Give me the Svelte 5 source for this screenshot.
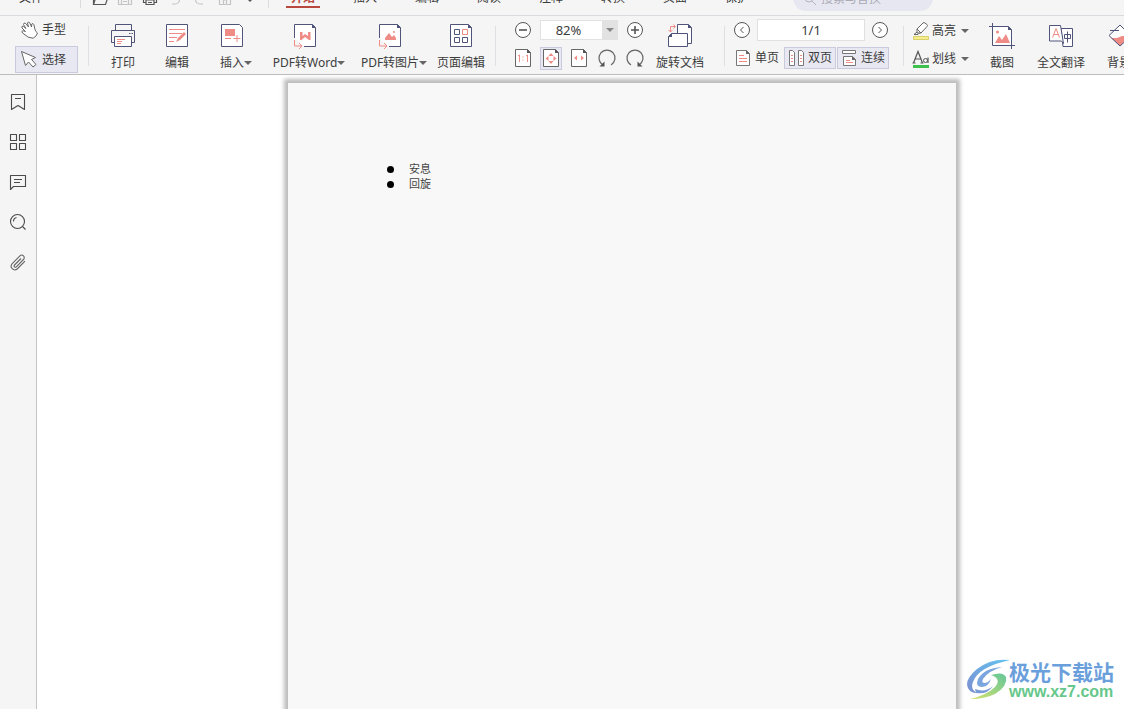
<script>
  const menus = ['插入', '编辑', '阅读', '注释', '转换', '页面', '保护'];
  const fileTools = [
    { id: 'open', label: '打开' },
    { id: 'save', label: '保存', dim: true },
    { id: 'print', label: '打印' },
    { id: 'undo', label: '撤销', dim: true },
    { id: 'redo', label: '恢复', dim: true },
    { id: 'home', label: '主页', dim: true },
    { id: 'more', label: '更多' }
  ];
  const mainTools = [
    { id: 'printer', label: '打印', size: 'normal' },
    { id: 'edit', label: '编辑', size: 'normal' },
    { id: 'insert', label: '插入', size: 'medium', menu: true },
    { id: 'word', label: 'PDF转Word', size: 'widest', menu: true },
    { id: 'image', label: 'PDF转图片', size: 'wide', menu: true },
    { id: 'pages', label: '页面编辑', size: 'roomy' }
  ];
  const endTools = [
    { id: 'shot', label: '截图', size: 'medium' },
    { id: 'translate', label: '全文翻译', size: 'roomy' },
    { id: 'back', label: '背景', size: 'normal' }
  ];
  const viewTools = [
    { id: 'actual', label: '实际大小' },
    { id: 'fit', label: '适合页面', on: true },
    { id: 'fitw', label: '适合宽度' },
    { id: 'ccw', label: '逆时针旋转' },
    { id: 'cw', label: '顺时针旋转' }
  ];
  const sideTools = [
    { id: 'bookmark', label: '书签' },
    { id: 'grid', label: '缩略图' },
    { id: 'comment', label: '批注' },
    { id: 'find', label: '查找' },
    { id: 'clip', label: '附件' }
  ];
  const items = ['安息', '回旋'];
  let zoom = $state('82%');
  let page = $state('1/1');
</script>

{#snippet fileIcon(id)}
  <svg width="16" height="16" viewBox="0 0 16 16" fill="none" stroke="currentColor" stroke-width="1.2">
    {#if id === 'open'}
      <path d="M1.500 13.500V2.500h5l2 2h5v3M1.500 13.500l2-6h12l-2 6z" />
    {:else if id === 'save'}
      <path d="M1.500 1.500h11l2 2v10h-13zM4.500 13v-5h7v5M6 10.500h4" />
    {:else if id === 'print'}
      <path d="M4 5V1.500h8V5M4 11.500H1.500V5.500h13v6H12M4 9h8v4.500H4zM6 11.500h4" />
    {:else if id === 'undo'}
      <path d="M5 1L2 4l3 3M2 4h6a4.500 4.500 0 0 1 0 9H5" />
    {:else if id === 'redo'}
      <path d="M11 1l3 3-3 3M14 4H8a4.500 4.500 0 0 0 0 9h3" />
    {:else if id === 'home'}
      <path d="M2.500 6.500L8 2l5.500 4.500v7h-11zM6.500 13V9h3v4" />
    {:else}
      <path d="M5 8h6l-3 3z" fill="currentColor" stroke="none" />
    {/if}
  </svg>
{/snippet}

{#snippet bigIcon(id)}
  <svg width="26" height="26" viewBox="0 0 26 26" fill="none" stroke="#4f5478" stroke-width="1">
    {#if id === 'printer'}
      <path d="M5.500 7.500v-6h16v6M5 19.500H1.500V7.500h23v12H21" />
      <path d="M4.500 13.500h17v10h-17z" fill="#fff" />
      <path d="M19 10.500h1.500M21.500 10.500H23" />
      <path d="M7 16.500h8M7 18.500h5M7 20.500h4" stroke="#ee8c85" />
    {:else if id === 'edit'}
      <path d="M2.500 1.500h21v22h-21z" fill="#fff" />
      <path d="M5 6.500h16M5 10.500h13M5 14.500h8M5 18.500h5" stroke="#ee8c85" />
      <path d="M12 19l2-4 6-6 2 2-6 6z" fill="#ee8c85" stroke="none" />
    {:else if id === 'insert'}
      <path d="M2.500 1.500h18l3 3v19h-21z" fill="#fff" />
      <path d="M6 6h10v7H6z" fill="#ee8c85" stroke="none" />
      <path d="M6 15.500h6M18 12v7M14.500 15.500h7" stroke="#ee8c85" />
    {:else if id === 'word' || id === 'image'}
      <path d="M2.500 15V1.500h18l3 3v19H12" fill="#fff" stroke="none" />
      <path d="M2.500 15V1.500h18l3 3v19H12" />
      <path d="M20 1v4h4z" fill="#4f5478" stroke="none" />
      <path d="M2.500 17v6h7M7 20l3 3-3 3" stroke="#ee8c85" />
      {#if id === 'word'}
        <path d="M8 9h2.500v4l2.500-2 3 2V9H18.500v8H17l-4-3-3.500 3H8z" fill="#ee8c85" stroke="none" />
      {:else}
        <path d="M8 17v-2l4-5 3 4 2-2 2 3v2z" fill="#ee8c85" stroke="none" />
        <circle cx="17" cy="9" r="1" fill="#ee8c85" stroke="none" />
      {/if}
    {:else if id === 'pages'}
      <path d="M2.500 1.500h18l3 3v19h-21z" fill="#fff" />
      <path d="M20 1v4h4z" fill="#4f5478" stroke="none" />
      <path d="M6.500 6.500h5v5h-5zM6.500 14.500h5v5h-5zM14.500 14.500h5v5h-5z" />
      <path d="M14.500 6.500h5v5h-5z" stroke="#ee8c85" />
    {:else if id === 'rotate'}
      <path d="M10.500 10V1.500h11l3 3v16h-4" fill="#fff" />
      <path d="M21 1v4h4z" fill="#4f5478" stroke="none" />
      <path d="M1.500 13.500l3-3h16v13h-19z" fill="#fff" />
      <path d="M1 14l4-4v4z" fill="#4f5478" stroke="none" />
      <path d="M3.500 9V3.500H8M1.500 7l2 2 2-2M6.500 1.500l2 2-2 2" stroke="#ee8c85" />
    {:else if id === 'shot'}
      <path d="M3.500 3.500h17l2 2v17h-19z" fill="#fff" stroke="none" />
      <path d="M0 3.500h19.500l3 3V26M3.500 0v22.500H26" />
      <path d="M19 3v4h4z" fill="#4f5478" stroke="none" />
      <path d="M6 20l4-7 3 4 4-6 4 9z" fill="#ee8c85" stroke="none" />
      <circle cx="8.500" cy="9" r="1.500" fill="#ee8c85" stroke="none" />
    {:else if id === 'translate'}
      <path d="M13 5.500h11.500v18H15z" fill="#fff" />
      <path d="M1.500 2.500h11l3 18-2-2.500h-12z" fill="#fff" />
      <path d="M4.500 14.500l3.500-9 3.500 9M6 11.500h4.500" stroke="#ee8c85" />
      <path d="M16.500 11.500h6v4h-6zM19.500 8.500v11" />
    {:else}
      <path d="M3 13L14 2l11 11-11 10z" fill="#fff" stroke="none" />
      <path d="M5 15l6 0 5-2 8 0-10 10z" fill="#ee8c85" stroke="none" />
      <path d="M3 12.500L14 2l11 11-11 10zM4 7.500h9" />
    {/if}
  </svg>
{/snippet}

{#snippet viewIcon(id)}
  <svg width="20" height="20" viewBox="0 0 20 20" fill="none" stroke="#666" stroke-width="1">
    {#if id === 'ccw'}
      <path d="M6 17a8 8 0 1 1 8 0" stroke-width="1.200" /><path d="M2.500 18.500H7.500V13.500z" fill="#555" stroke="none" />
    {:else if id === 'cw'}
      <path d="M14 17a8 8 0 1 0-8 0" stroke-width="1.200" /><path d="M17.500 18.500H12.500V13.500z" fill="#555" stroke="none" />
    {:else}
      <path d="M2.500 1.500h12l3 3v14h-15z" fill="#fff" />
      <path d="M14 1v4h4z" fill="#555" stroke="none" />
      {#if id === 'actual'}
        <path d="M5 8l1.500-1v7M13 8l1.500-1v7M10 8.500v1M10 11.500v1" stroke="#ee8c85" />
      {:else if id === 'fit'}
        <path d="M10 5l2.500 3h-5zM10 16l2.500-3h-5zM4.500 10.500l3-2.500v5zM15.500 10.500l-3-2.500v5z" fill="#ee8c85" stroke="none" />
      {:else}
        <path d="M5 10l3-2.500v5zM15 10l-3-2.500v5z" fill="#ee8c85" stroke="none" />
      {/if}
    {/if}
  </svg>
{/snippet}

{#snippet circleIcon(id)}
  <svg width="18" height="18" viewBox="0 0 18 18" fill="none" stroke="#555">
    <circle cx="9" cy="9" r="7.500" fill="#fff" />
    {#if id === 'minus'}<path d="M5 9h8" stroke-width="1.600" />
    {:else if id === 'plus'}<path d="M5 9h8M9 5v8" stroke-width="1.600" />
    {:else if id === 'prev'}<path d="M10.500 6l-3 3 3 3" />
    {:else}<path d="M7.500 6l3 3-3 3" />{/if}
  </svg>
{/snippet}

{#snippet modeIcon(id)}
  <svg width="18" height="18" viewBox="0 0 18 18" fill="none" stroke="#777" stroke-width="1">
    {#if id === 'single'}
      <path d="M2.500 1.500h10l3 3v12h-13z" fill="#fff" /><path d="M12 1v4h4z" fill="#666" stroke="none" />
      <path d="M5 6.500h5M5 9.500h8M5 12.500h8" stroke="#ee8c85" />
    {:else if id === 'double'}
      <path d="M2.500 1.500h3l2 2v13h-5zM11.500 1.500h3l2 2v13h-5z" fill="#fff" />
      <path d="M4 6.500h2M4 9.500h2M4 12.500h2M13 6.500h2M13 9.500h2M13 12.500h2" stroke="#ee8c85" />
    {:else}
      <path d="M2.500 1.500h13v3h-13zM3.500 7.500h9l3 3v6h-12z" fill="#fff" /><path d="M12 7v4h4z" fill="#666" stroke="none" />
      <path d="M6 11.500h4M6 13.500h7" stroke="#ee8c85" />
    {/if}
  </svg>
{/snippet}

{#snippet tool(t)}
  <button class="tool {t.size}">
    {@render bigIcon(t.id)}
    <span class="label">{t.label}{#if t.menu}<i class="arrow hang"></i>{/if}</span>
  </button>
{/snippet}

<div class="app">
  <header class="menubar">
    <button class="file">文件</button>
    <div class="quick">
      {#each fileTools as t}
        <button class:dim={t.dim} aria-label={t.label}>{@render fileIcon(t.id)}</button>
      {/each}
    </div>
    <nav>
      <button class="current">开始</button>
      {#each menus as m}<button>{m}</button>{/each}
    </nav>
    <label class="search">
      <svg width="12" height="12" viewBox="0 0 12 12" fill="none" stroke="#b4b5c0"><circle cx="5" cy="5" r="4" /><path d="M8 8l4 4" /></svg>
      <input type="text" placeholder="搜索与替换" aria-label="搜索与替换" />
    </label>
  </header>

  <div class="toolbar">
    <div class="stack cursor">
      <button class="small">
        <svg width="20" height="20" viewBox="0 0 20 20" fill="#fff" stroke="#666" stroke-width="1" stroke-linejoin="round" stroke-linecap="round">
          <path d="M8 17L2.500 13q-1.500-1.800.5-2.300l2.500.8L2 8q-.8-2 1.300-1.800L6 8.500 3.500 4.500q0-2 2-1.200L8.500 7 7.500 3q.8-1.900 2.200-.3L11.500 7l.3-3q1.200-1.300 2 .5L15 9.500q.3 2 2.500 3.500-.5 3-4 5z" />
        </svg>手型
      </button>
      <button class="small on">
        <svg width="20" height="20" viewBox="0 0 20 20" fill="#fff" stroke="#666" stroke-width="1" stroke-linejoin="round">
          <path d="M1.500 1.500l4 14 3-3.500 4.500 5 3-2.500-4.500-5 4-2z" />
        </svg>选择
      </button>
    </div>
    <div class="group">
      {#each mainTools as t}{@render tool(t)}{/each}
    </div>
    <div class="group zoom">
      <div class="stack">
        <div class="line">
          <button class="ic" aria-label="缩小">{@render circleIcon('minus')}</button>
          <div class="combo">
            <input type="text" bind:value={zoom} aria-label="缩放比例" />
            <button aria-label="选择缩放比例"><i class="arrow"></i></button>
          </div>
          <button class="ic" aria-label="放大">{@render circleIcon('plus')}</button>
        </div>
        <div class="line views">
          {#each viewTools as t}
            <button class="ic" class:on={t.on} aria-label={t.label}>{@render viewIcon(t.id)}</button>
          {/each}
        </div>
      </div>
      {@render tool({ id: 'rotate', label: '旋转文档', size: 'roomy' })}
    </div>
    <div class="group paging">
      <div class="stack">
        <div class="line">
          <button class="ic" aria-label="上一页">{@render circleIcon('prev')}</button>
          <input class="pageno" type="text" bind:value={page} aria-label="页码" />
          <button class="ic" aria-label="下一页">{@render circleIcon('next')}</button>
        </div>
        <div class="line modes">
          <button class="mode">{@render modeIcon('single')}单页</button>
          <button class="mode on">{@render modeIcon('double')}双页</button>
          <button class="mode on">{@render modeIcon('cont')}连续</button>
        </div>
      </div>
    </div>
    <div class="group last">
      <div class="stack">
        <button class="mark">
          <svg width="18" height="20" viewBox="0 0 18 20" fill="none" stroke="#666" stroke-width="1">
            <path d="M5 8l6-6q1-1 2 0l2 1.500q1 1 0 2L9 12H5zM5 8l4 4M5 11l-3 2.500h4l2-2" fill="#fff" />
            <path d="M1.500 15.500h15v3h-15z" fill="#f4ee8e" stroke="#d9d06a" />
          </svg>高亮<i class="arrow"></i>
        </button>
        <button class="mark">
          <svg width="18" height="20" viewBox="0 0 18 20" fill="none" stroke="#555" stroke-width="1.200">
            <path d="M1.500 14L6 2.500 10.500 14M3 10h6M16 8.500v5.500M0.500 14h3M8.500 14h3" />
            <circle cx="13.500" cy="11.500" r="2" stroke-width="1" />
            <path d="M1 16h16v3H1z" fill="#3fc04c" stroke="none" />
          </svg>划线<i class="arrow"></i>
        </button>
      </div>
      {#each endTools as t}{@render tool(t)}{/each}
    </div>
  </div>

  <div class="body">
    <aside>
      {#each sideTools as t}
        <button aria-label={t.label}>
          <svg width="18" height="18" viewBox="0 0 18 18" fill="none" stroke="#4a4a4a" stroke-width="1.100" stroke-linejoin="round">
            {#if t.id === 'bookmark'}
              <path d="M2.500 1.500h13v15L9 12.500l-6.500 4zM6 5.500h6" />
            {:else if t.id === 'grid'}
              <path d="M1.500 1.500h6v6h-6zM10.500 1.500h6v6h-6zM1.500 10.500h6v6h-6zM10.500 10.500h6v6h-6z" />
            {:else if t.id === 'comment'}
              <path d="M1.500 2.500h15v11H4.500l-3 3zM5 6.500h8M5 9.500h6" />
            {:else if t.id === 'find'}
              <circle cx="8.500" cy="8.500" r="7" /><path d="M4.500 8.500a4 4 0 0 1 3-4M13.500 13.500l3 3" />
            {:else}
              <path d="M12 5L5.500 11.500a1.200 1.200 0 0 0 1.800 1.800L14.500 6a2.500 2.500 0 0 0-3.600-3.600L3 10.300a3.700 3.700 0 0 0 5.200 5.200L16 7.700" transform="translate(0 .5)" stroke="#666" />
            {/if}
          </svg>
        </button>
      {/each}
    </aside>
    <main>
      <article>
        <ul>
          {#each items as item}<li>{item}</li>{/each}
        </ul>
      </article>
      <div class="brand">
        <svg width="44" height="42" viewBox="0 0 44 42">
          <defs>
            <linearGradient id="blue" x1="0" y1="1" x2="1" y2="0"><stop offset="0" stop-color="#7b8fd0" /><stop offset="1" stop-color="#63c3f0" /></linearGradient>
            <linearGradient id="green" x1="0" y1="1" x2="1" y2="0"><stop offset="0" stop-color="#d8e26c" /><stop offset="1" stop-color="#62c69a" /></linearGradient>
          </defs>
          <path d="M44 1Q25-1 11 10-2 21 2 29q2 5 9 5-7-4-4-11Q12 8 44 1z" fill="url(#blue)" />
          <path d="M36 8Q18 9 12 20q-3 8 4 8 7-1 9-8-2 3-6 4-4 0-2-4 5-8 19-12z" fill="#7ba5de" />
          <path d="M25 16q12-4 15 2 2 9-11 17-10 5-25 5 17-4 25-12 7-8-4-12z" fill="url(#green)" />
          <path d="M9 30q10 4 18-3-6 9-17 7z" fill="#7b9bd8" />
        </svg>
        <div><strong>极光下载站</strong><a href="#xz7">www.xz7.com</a></div>
      </div>
    </main>
  </div>
</div>

<style>
  :global(body) { margin: 0; overflow: hidden; }
  .app { display: flex; flex-direction: column; height: 100vh; overflow: hidden; background: #fff; color: #3c3c3c; font: 12px/16px "Noto Sans", "Noto Sans CJK SC", sans-serif; }
  button, input { font: inherit; color: inherit; border: 0; padding: 0; margin: 0; background: none; box-sizing: border-box; }
  svg { display: block; flex: none; }
  .menubar { display: flex; align-items: flex-end; height: 15px; flex: none; overflow: hidden; background: #f5f5f5; border-bottom: 1px solid #d9dade; }
  .menubar > *:not(.search) { margin-bottom: 7px; }
  .file { width: 81px; height: 20px; flex: none; padding-left: 19px; text-align: left; border-right: 1px solid #dcdcdc; }
  .quick { display: flex; flex: none; width: 188px; padding-left: 6px; box-sizing: border-box; border-right: 1px solid #dcdcdc; }
  .quick button { width: 25px; height: 18px; display: grid; place-items: center; color: #555; }
  .quick .dim { color: #c4c4c4; }
  nav { display: flex; flex: none; padding-left: 3px; }
  nav button { width: 62px; height: 20px; }
  nav .current { position: relative; color: #b8463c; font-weight: 700; }
  nav .current::after { content: ""; position: absolute; left: 14px; right: 14px; bottom: 0; height: 2px; background: #b9493f; }
  .search { display: flex; align-items: center; gap: 5px; flex: none; width: 140px; height: 26px; margin: 0 0 4px 25px; padding: 2px 11px 0; box-sizing: border-box; border-radius: 13px; background: #e7e7f1; }
  .search input { width: 90px; height: 16px; }
  .search input::placeholder { color: #a9aab4; opacity: 1; }
  .toolbar { display: flex; flex: none; height: 58px; overflow: hidden; background: #f5f5f5; border-bottom: 1px solid #bcbcbc; }
  .stack { display: flex; flex-direction: column; flex: none; }
  .cursor { width: 88px; padding: 0 10px 0 15px; box-sizing: border-box; }
  .small { display: flex; align-items: center; gap: 2px; height: 27px; padding: 0 4px; border: 1px solid transparent; }
  .small:first-child { height: 30px; padding-bottom: 2px; }
  .on { background: #e8e8f2; border: 1px solid #c9cadb; }
  .group { display: flex; flex: none; position: relative; padding-left: 8px; }
  .group::before { content: ""; position: absolute; left: 0; top: 10px; width: 1px; height: 40px; background: #dedfe2; }
  .tool { display: flex; flex-direction: column; align-items: center; gap: 6px; flex: none; padding-top: 7px; }
  .normal { width: 54px; }
  .medium { width: 56px; }
  .roomy { width: 62px; }
  .wide { width: 80px; }
  .widest { width: 90px; }
  .label { display: flex; align-items: center; white-space: nowrap; }
  .arrow { display: block; width: 0; height: 0; border: 4px solid transparent; border-top-color: #666; border-bottom: 0; }
  .hang { margin-right: -8px; }
  .zoom { margin-left: 3px; padding-left: 14px; }
  .line { display: flex; align-items: center; height: 28px; }
  .ic { width: 28px; height: 28px; display: grid; place-items: center; flex: none; }
  .zoom .stack { width: 140px; }
  .combo { display: flex; flex: 1; height: 18px; margin: 0 3px; border: 1px solid #e2e2e2; background: #fff; }
  .combo input { width: 61px; font-size: 13px; text-align: center; padding-right: 6px; }
  .combo button { flex: 1; background: #e2e2e2; display: grid; place-items: center; }
  .combo .arrow { border-top-color: #888; }
  .views .on { width: 22px; height: 23px; margin: 0 3px; }
  .paging { margin-left: 13px; padding-left: 4px; }
  .paging .stack { width: 166px; }
  .pageno { flex: 1; min-width: 0; height: 22px; margin: 0 1px; border: 1px solid #e0e0e0; background: #fff; text-align: center; font-size: 13px; }
  .modes { gap: 1px; padding-left: 3px; }
  .mode { display: flex; align-items: center; gap: 3px; height: 22px; width: 52px; padding: 0 2px; flex: none; border: 1px solid transparent; white-space: nowrap; }
  .mode.on { border-color: #c9cadb; }
  .last { margin-left: 9px; padding-left: 9px; }
  .last .stack { width: 62px; padding-top: 1px; }
  .mark { display: flex; align-items: center; gap: 2px; height: 28px; white-space: nowrap; }
  .mark .arrow { margin-left: 3px; }
  .body { display: flex; flex: 1; min-height: 0; }
  aside { display: flex; flex-direction: column; gap: 22px; align-items: center; width: 36px; padding-top: 18px; flex: none; background: #f5f5f5; border-right: 1px solid #c4c4c4; }
  aside button { height: 18px; }
  main { flex: 1; position: relative; overflow: hidden; padding: 8px 168px 0 251px; }
  article { height: 100%; padding: 79px 96px 0; box-sizing: border-box; background: #f8f8f8; box-shadow: 0 0 4px 4px #bdbdbd; }
  ul { margin: 0; padding: 0; list-style: none; font: 11px/15px "Liberation Serif", "Noto Sans CJK SC", serif; color: #444; }
  li { display: flex; align-items: center; gap: 15px; padding-left: 3px; }
  li::before { content: ""; width: 7px; height: 7px; border-radius: 50%; background: #000; }
  .brand { position: absolute; right: 10px; bottom: 8px; display: flex; align-items: center; color: #6b9fdc; }
  .brand div { display: flex; flex-direction: column; margin-left: -1px; }
  .brand strong { font: 700 21px/24px "Noto Sans CJK SC", sans-serif; white-space: nowrap; }
  .brand a { font: 700 16px/18px "Liberation Sans", sans-serif; color: #66c78b; text-decoration: none; }
</style>
